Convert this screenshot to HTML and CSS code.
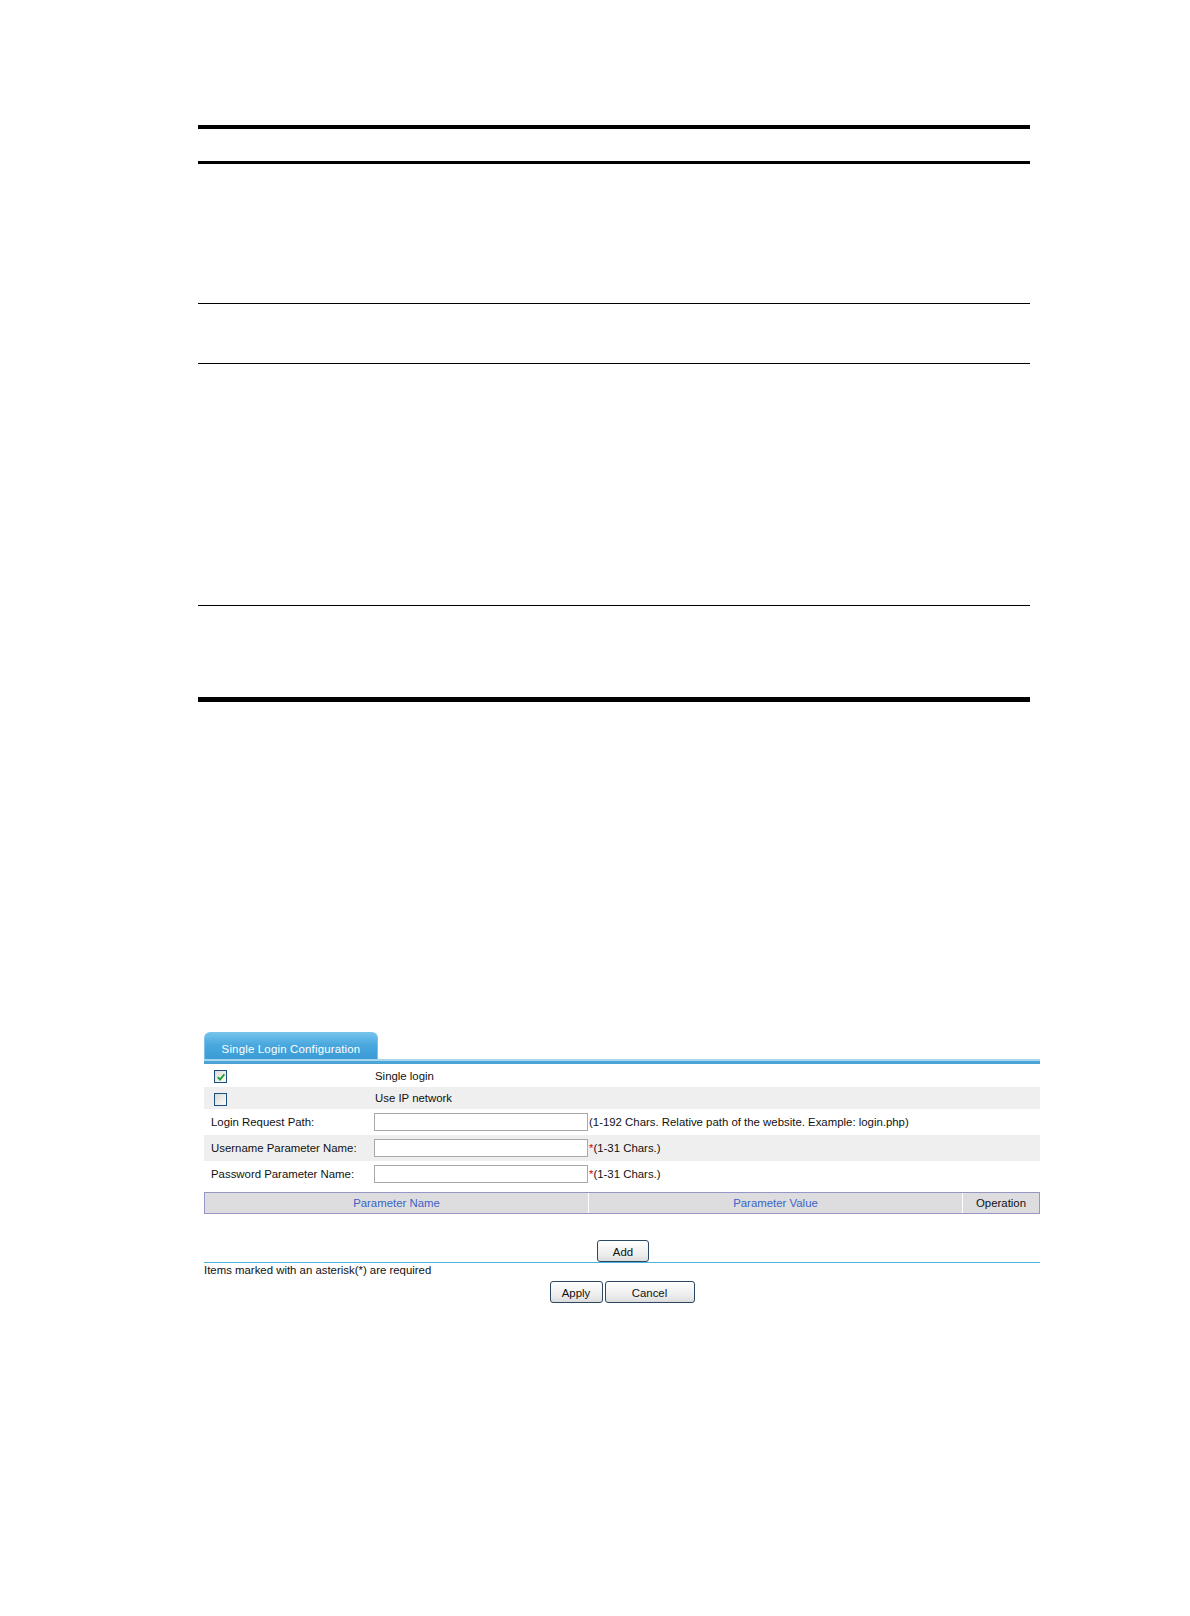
FILE: index.html
```html
<!DOCTYPE html>
<html>
<head>
<meta charset="utf-8">
<link rel="stylesheet" href="styles.css">
</head>
<body>
<div class="doc">
  <div class="doc-head"></div>
  <div class="doc-row r1"></div>
  <div class="doc-row r2"></div>
  <div class="doc-row r3"></div>
  <div class="doc-row r4"></div>
</div>

<div class="panel">
  <div class="tabs">
    <div class="tab">Single Login Configuration</div>
  </div>
  <div class="tabbar"></div>
  <div class="row chk white">
    <div class="c1"><span class="cb checked"><svg viewBox="0 0 10 10" width="10" height="10"><path d="M1.8 5.2 L4 7.6 L8.4 2.2" fill="none" stroke="#1f9b2a" stroke-width="1.8"/></svg></span></div>
    <div class="c2">Single login</div>
  </div>
  <div class="row chk grey">
    <div class="c1"><span class="cb"></span></div>
    <div class="c2">Use IP network</div>
  </div>
  <div class="row fld white">
    <div class="c1 lbl">Login Request Path:</div>
    <div class="c2"><span class="inp"></span><span class="hint">(1-192 Chars. Relative path of the website. Example: login.php)</span></div>
  </div>
  <div class="row fld grey">
    <div class="c1 lbl">Username Parameter Name:</div>
    <div class="c2"><span class="inp"></span><span class="hint"><span class="req">*</span>(1-31 Chars.)</span></div>
  </div>
  <div class="row fld white">
    <div class="c1 lbl">Password Parameter Name:</div>
    <div class="c2"><span class="inp"></span><span class="hint"><span class="req">*</span>(1-31 Chars.)</span></div>
  </div>
  <div class="grid">
    <div class="gh name">Parameter Name</div>
    <div class="gh value">Parameter Value</div>
    <div class="gh op">Operation</div>
  </div>
  <div class="addrow"><span class="btn add">Add</span></div>
  <div class="footline"></div>
  <div class="note">Items marked with an asterisk(*) are required</div>
  <div class="actions"><span class="btn apply">Apply</span><span class="btn cancel">Cancel</span></div>
</div>
</body>
</html>
```

FILE: styles.css
```css
html, body {
  margin: 0;
  padding: 0;
  background: #fff;
}
body {
  font-family: "Liberation Sans", Arial, sans-serif;
  font-size: 11.4px;
  color: #111;
}
.doc {
  margin: 125px 0 0 198px;
  width: 832px;
  border-top: 4px solid #000;
}
.doc-head {
  height: 32px;
  border-bottom: 3px solid #000;
}
.doc-row {
  border-bottom: 1px solid #000;
}
.r1 { height: 139px; }
.r2 { height: 59px; }
.r3 { height: 241px; }
.r4 { height: 91px; border-bottom: 5px solid #000; }

.panel {
  margin: 330px 0 0 204px;
  width: 836px;
}
.tabs {
  display: flex;
}
.tab {
  width: 172px;
  height: 20px;
  border: 1px solid #7cc3ea;
  border-bottom: none;
  border-radius: 6px 6px 0 0;
  background: linear-gradient(#72c2ec 0%, #4aa8de 45%, #3a9bd6 100%);
  color: #fff;
  font-size: 11.4px;
  letter-spacing: 0.2px;
  display: flex;
  align-items: center;
  justify-content: center;
  padding-top: 6px;
  box-sizing: content-box;
}
.tabbar {
  height: 5px;
  background: linear-gradient(#a6d6f0 0, #a6d6f0 2px, #4fa7d8 2px, #4aa2d4 5px);
}
.row {
  display: flex;
  align-items: center;
}
.white { background: #fff; }
.grey { background: #efefef; }
.chk { height: 22px; }
.chk.white { height: 23px; }
.fld { height: 26px; }
.c1 {
  width: 170px;
  flex: none;
  display: flex;
  align-items: center;
}
.c1.lbl {
  padding-left: 7px;
  width: 163px;
}
.c2 {
  display: flex;
  align-items: center;
}
.chk .c2 { padding-left: 1px; }
.cb {
  margin-left: 10px;
  width: 11px;
  height: 11px;
  border: 1px solid #1d4f7e;
  background: linear-gradient(135deg, #dcdcd6, #fbfbf9);
  display: flex;
  align-items: center;
  justify-content: center;
  margin-top: 2px;
}
.inp {
  width: 212px;
  height: 16px;
  border: 1px solid #a8a8a8;
  background: #fff;
  display: inline-block;
}
.hint {
  margin-left: 1px;
}
.req { color: #e00000; }

.grid {
  margin-top: 5px;
  display: grid;
  grid-template-columns: 383px 1fr 76px;
  height: 20px;
  border: 1px solid #9696c4;
  background: #dddddf;
  width: 834px;
}
.gh {
  display: flex;
  align-items: center;
  justify-content: center;
  color: #3b63c8;
}
.gh.value {
  border-left: 1px solid #fff;
  border-right: 1px solid #fff;
}
.gh.op { color: #111; }

.addrow {
  display: flex;
  justify-content: center;
  padding-top: 26px;
  height: 22px;
}
.btn {
  display: inline-flex;
  align-items: center;
  justify-content: center;
  height: 19px;
  border: 1px solid #2b4863;
  border-radius: 3px;
  background: linear-gradient(#ffffff, #ececec 70%, #dcdcdc);
  color: #111;
  box-sizing: content-box;
  padding-top: 1px;
}
.add { width: 50px; margin-left: 2px; }
.footline {
  height: 1px;
  background: #49b5dc;
}
.note {
  height: 15px;
  line-height: 15px;
  margin-top: 0;
  margin-bottom: 3px;
}
.actions {
  display: flex;
  justify-content: center;
  gap: 2px;
}
.apply { width: 51px; }
.cancel { width: 88px; }
```
